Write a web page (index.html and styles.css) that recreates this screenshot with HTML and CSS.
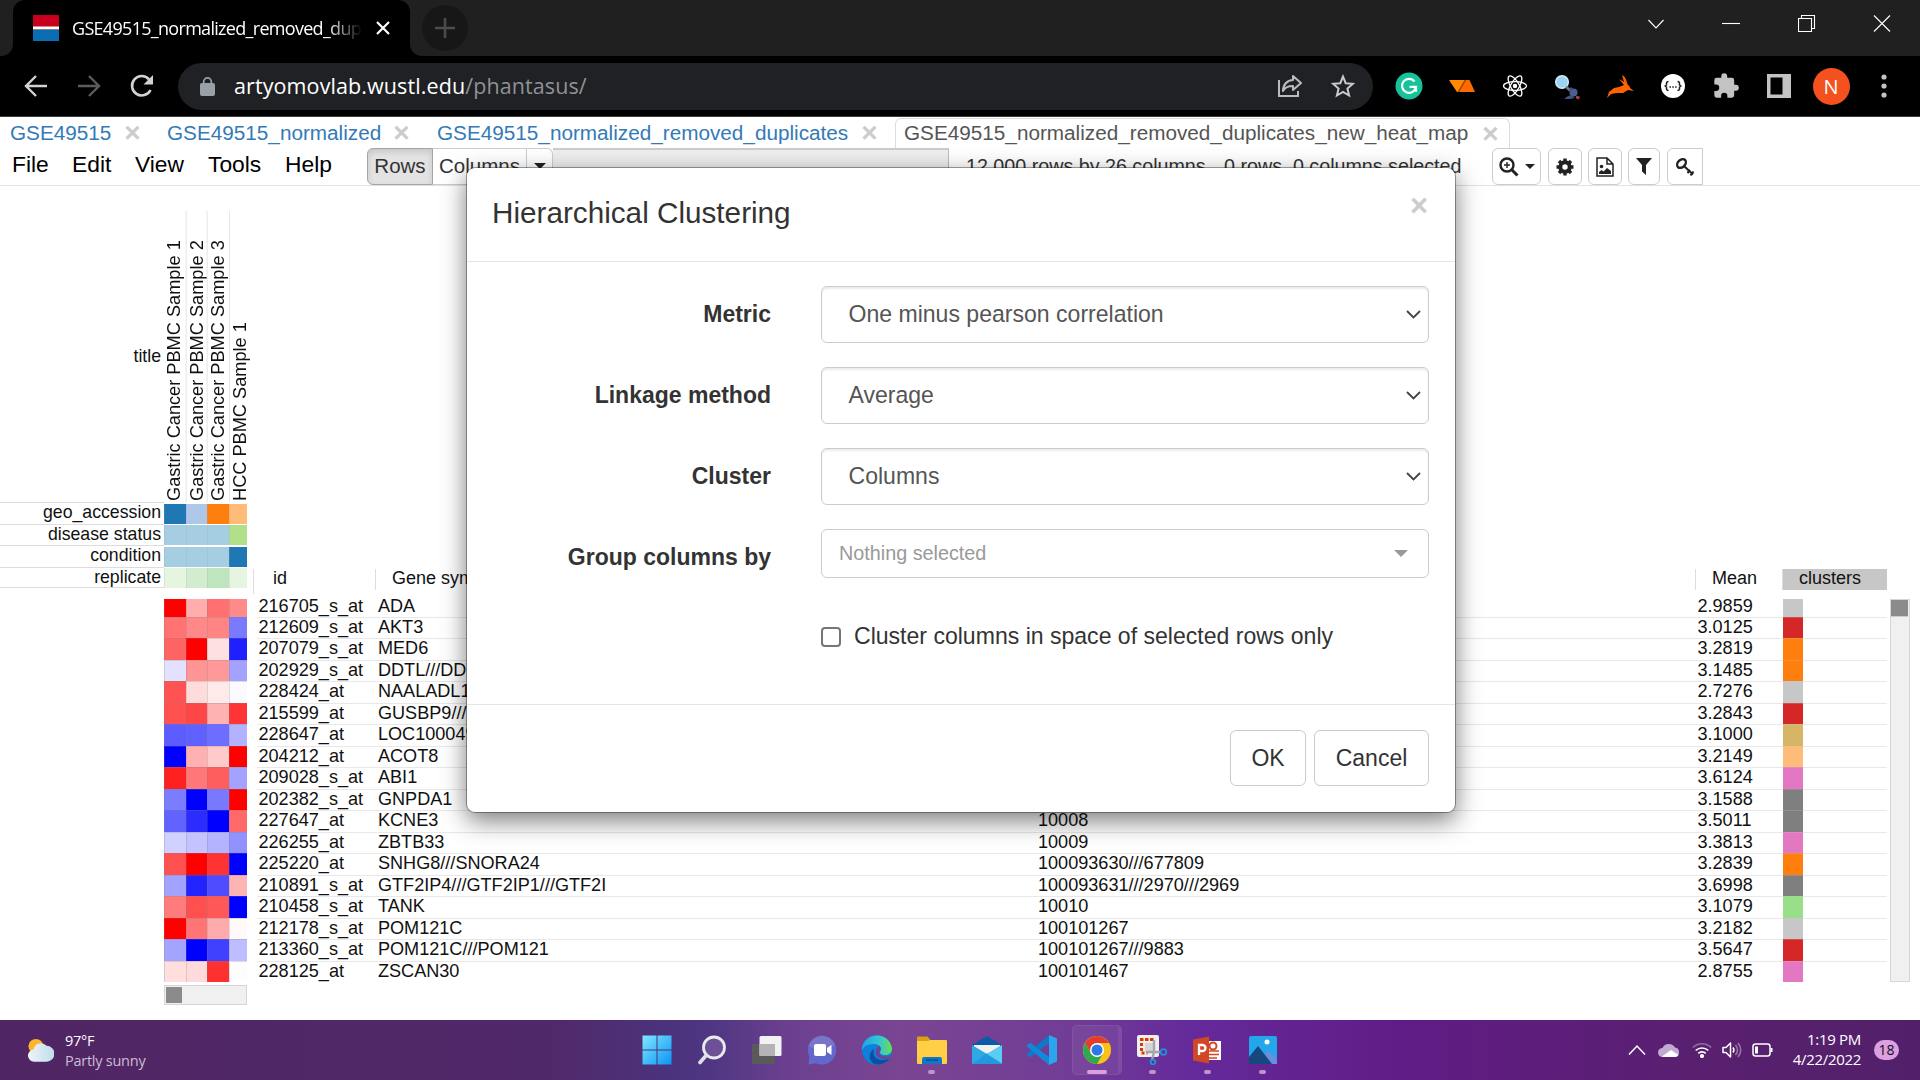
FILE: index.html
```html
<!DOCTYPE html>
<html lang="en">
<head>
<meta charset="utf-8">
<title>GSE49515_normalized_removed_duplicates_new_heat_map</title>
<link rel="stylesheet" href="styles.css">
</head>
<body>
<header class="tabstrip">
  <div class="browser-tab">
    <svg class="favicon" viewBox="0 0 26 26" preserveAspectRatio="none"><rect width="26" height="12" fill="#c8001e"/><rect y="11.500" width="26" height="3" fill="#fff"/><rect y="15" width="26" height="11" fill="#0a6cb2"/></svg>
    <span class="tab-title">GSE49515_normalized_removed_dup</span>
    <svg class="tab-x" viewBox="0 0 14 14"><path d="M1 1l12 12M13 1L1 13" stroke="#fff" stroke-width="2.200"/></svg>
  </div>
  <div class="new-tab"><svg width="20" height="20" viewBox="0 0 20 20"><path d="M10 0v20M0 10h20" stroke="#4c4c4c" stroke-width="2.500"/></svg></div>
  <div class="win-controls">
    <svg width="18" height="18" viewBox="0 0 18 18"><path d="M1.500 5L9 13 16.500 5"/></svg>
    <svg width="18" height="18" viewBox="0 0 18 18"><path d="M0 8.500h18"/></svg>
    <svg width="18" height="18" viewBox="0 0 18 18"><path d="M.5 3.500h13v13H.5zM3.500 3.500v-3h13v13h-3"/></svg>
    <svg width="18" height="18" viewBox="0 0 18 18"><path d="M1 .5l16 16M17 .5L1 16.500"/></svg>
  </div>
</header>

<div class="toolbar">
  <svg class="nav-back" width="24" height="24" viewBox="0 0 24 24"><path d="M23 12H3M12 2L2 12l10 10" fill="none" stroke="#d2d2d2" stroke-width="2.400"/></svg>
  <svg class="nav-fwd" width="24" height="24" viewBox="0 0 24 24"><path d="M1 12h20M12 2l10 10-10 10" fill="none" stroke="#5c5c5c" stroke-width="2.400"/></svg>
  <svg class="nav-reload" width="24" height="24" viewBox="0 0 24 24"><path d="M20.500 16A9.700 9.700 0 1 1 19 5.300" fill="none" stroke="#d2d2d2" stroke-width="2.600"/><path d="M23 1v9.500h-9.500z" fill="#d2d2d2"/></svg>
  <div class="omnibox">
    <svg width="15" height="19" viewBox="0 0 15 19"><rect y="6" width="15" height="13" rx="2" fill="#9aa0a6"/><path d="M3.700 7V4.700a3.800 3.800 0 0 1 7.600 0V7" fill="none" stroke="#9aa0a6" stroke-width="1.700"/></svg>
    <span class="url">artyomovlab.wustl.edu<span class="path">/phantasus/</span></span>
    <svg class="share" width="26" height="24" viewBox="0 0 26 24" fill="none" stroke="#b9bcbf" stroke-width="2"><path d="M2 6v16h19v-5"/><path d="M16 2l8 7-8 7v-4c-5 0-8 1-10 5 0-6 4-11 10-11z" stroke-linejoin="round"/></svg>
    <svg width="24" height="24" viewBox="0 0 24 24" fill="none" stroke="#c8cacc" stroke-width="2"><path d="M12 2.500l2.700 6.700 7.200.6-5.500 4.700 1.700 7-6.100-3.700-6.100 3.700 1.700-7L2.100 9.800l7.200-.6z"/></svg>
  </div>
  <div class="extensions">
    <svg width="28" height="28" viewBox="0 0 28 28"><circle cx="14" cy="14" r="13.500" fill="#15c39a"/><path d="M19.500 9.500A7 7 0 1 0 20.800 15.500M14.500 14.800h6.500v5" fill="none" stroke="#fff" stroke-width="2.200"/></svg>
    <svg width="28" height="28" viewBox="0 0 28 28"><path d="M1 8h17l-7 12H9z" fill="#ff8a00"/><path d="M18 8h3.500L27 20H11z" fill="#ff6a00"/><path d="M18 8l-7 12h-1.500l7-12z" fill="#a84300"/></svg>
    <svg width="28" height="28" viewBox="0 0 28 28" fill="none" stroke="#fff" stroke-width="1.300"><ellipse cx="14" cy="14" rx="11.500" ry="4.300"/><ellipse cx="14" cy="14" rx="11.500" ry="4.300" transform="rotate(60 14 14)"/><ellipse cx="14" cy="14" rx="11.500" ry="4.300" transform="rotate(120 14 14)"/><circle cx="14" cy="14" r="1.600" fill="#fff"/></svg>
    <svg width="28" height="28" viewBox="0 0 28 28"><circle cx="9" cy="10" r="6.300" fill="#9ad4f3" stroke="#d6e8f4" stroke-width="1.500"/><path d="M13 14.500l4 4" stroke="#6e7a92" stroke-width="2.600"/><circle cx="20.500" cy="20.500" r="4" fill="#4a608f"/><path d="M16 17l2-2 2 2-2 3zM11 27q3-3 7-4l4 3-5 1z" fill="#41547f"/><path d="M23 24l4 .5-1 3-3-1z" fill="#a8443d"/></svg>
    <svg width="28" height="28" viewBox="0 0 28 28"><path d="M1 26l2-6 5-4 5-1 5-2-5-6 5 3-2-7q4 2 5 8l1 2q2 1 2 3l4 3-6-1-5 3-6 0-6 1z" fill="#ff6200"/></svg>
    <svg width="28" height="28" viewBox="0 0 28 28"><circle cx="14" cy="14" r="12" fill="#fff"/><path d="M9.500 9.500q-2 0-2 2V13l-1.300 1 1.300 1v1.500q0 2 2 2M18.500 9.500q2 0 2 2V13l1.300 1-1.300 1v1.500q0 2-2 2" fill="none" stroke="#222" stroke-width="1.500"/><path d="M10.500 15h1.500m1.300 0h1.500m1.300 0h1.500" stroke="#222" stroke-width="1.500"/></svg>
    <svg width="28" height="28" viewBox="0 0 24 24"><path d="M20.500 11H19V7a2 2 0 0 0-2-2h-4V3.500a2.500 2.500 0 0 0-5 0V5H4a2 2 0 0 0-2 2v3.800h1.500a2.700 2.700 0 0 1 0 5.400H2V20a2 2 0 0 0 2 2h3.800v-1.500a2.700 2.700 0 0 1 5.400 0V22H17a2 2 0 0 0 2-2v-4h1.500a2.500 2.500 0 0 0 0-5z" fill="#c3c3c3"/></svg>
    <svg width="28" height="28" viewBox="0 0 28 28"><path d="M2 2h24v24H2zM5.500 5.500v17h12v-17z" fill="#c3c3c3" fill-rule="evenodd"/></svg>
  </div>
  <div class="avatar">N</div>
  <svg class="kebab" width="6" height="24" viewBox="0 0 6 24" fill="#c3c3c3"><circle cx="3" cy="3" r="2.600"/><circle cx="3" cy="12" r="2.600"/><circle cx="3" cy="21" r="2.600"/></svg>
</div>

<main class="page">
  <nav class="sheets">
    <a class="sheet s1">GSE49515</a><b class="x x1">×</b>
    <a class="sheet s2">GSE49515_normalized</a><b class="x x2">×</b>
    <a class="sheet s3">GSE49515_normalized_removed_duplicates</a><b class="x x3">×</b>
    <div class="active-sheet"><span class="s4">GSE49515_normalized_removed_duplicates_new_heat_map</span><b class="x">×</b></div>
  </nav>
  <div class="menubar">
    <span class="menu m1">File</span><span class="menu m2">Edit</span><span class="menu m3">View</span><span class="menu m4">Tools</span><span class="menu m5">Help</span>
    <div class="search">
      <span class="seg seg-on">Rows</span><span class="seg seg-col">Columns</span><span class="seg seg-caret"><i class="caret"></i></span><span class="search-box"></span>
    </div>
    <span class="info"><span class="dims">12,000 rows by 26 columns</span><span class="sel">0 rows, 0 columns selected</span></span>
    <div class="tools">
      <button class="tool t1"><svg width="20" height="20" viewBox="0 0 20 20" fill="none" stroke="#222"><circle cx="8" cy="8" r="6.500" stroke-width="2.400"/><path d="M13 13l5.500 5.500" stroke-width="3"/><path d="M8 5v6M5 8h6" stroke-width="1.400"/></svg><i class="caret small"></i></button>
      <button class="tool t2"><svg width="20" height="20" viewBox="0 0 20 20"><circle cx="10" cy="10" r="4.700" fill="none" stroke="#222" stroke-width="4"/><path d="M10 1.500v3M10 15.500v3M1.500 10h3M15.500 10h3M4 4l2 2M14 14l2 2M4 16l2-2M14 6l2-2" stroke="#222" stroke-width="3.400"/></svg></button>
      <button class="tool t3"><svg width="18" height="20" viewBox="0 0 18 20"><path d="M1 1h10l6 6v12H1zM11 1v6h6" fill="none" stroke="#222" stroke-width="1.500"/><circle cx="5.500" cy="9.500" r="1.800" fill="#222"/><path d="M3 17v-2l2.500-2 2 1.500 3.500-3.500 4 3v3z" fill="#222"/></svg></button>
      <button class="tool t4"><svg width="16" height="17" viewBox="0 0 16 17"><path d="M0 0h16l-6 7v10l-4-3.500V7z" fill="#222"/></svg></button>
      <button class="tool t5"><svg width="20" height="20" viewBox="0 0 20 20" fill="none" stroke="#222"><ellipse cx="6.500" cy="6.500" rx="5" ry="3.600" transform="rotate(-45 6.500 6.500)" stroke-width="2.400"/><path d="M9 9l9 8.500" stroke-width="2"/><path d="M12.500 16l2.500-3M15.500 18.500l3-4" stroke-width="2"/></svg></button>
    </div>
  </div>

  <section class="top">
    <div class="annot">
      <div class="titles">
        <span class="annot-label">title</span>
        <span class="vt">Gastric Cancer PBMC Sample 1</span><span class="vt">Gastric Cancer PBMC Sample 2</span><span class="vt">Gastric Cancer PBMC Sample 3</span><span class="vt">HCC PBMC Sample 1</span>
      </div>
      <div class="arow"><span class="annot-label">geo_accession</span><i style="background:#1f77b4"></i><i style="background:#aec7e8"></i><i style="background:#ff7f0e"></i><i style="background:#ffbb78"></i></div>
      <div class="arow"><span class="annot-label">disease status</span><i style="background:#a6cee3"></i><i style="background:#a6cee3"></i><i style="background:#a6cee3"></i><i style="background:#b2df8a"></i></div>
      <div class="arow"><span class="annot-label">condition</span><i style="background:#a6cee3"></i><i style="background:#a6cee3"></i><i style="background:#a6cee3"></i><i style="background:#1f78b4"></i></div>
      <div class="arow last"><span class="annot-label">replicate</span><i style="background:#e5f5e0"></i><i style="background:#d1ecce"></i><i style="background:#bfe5bf"></i><i style="background:#e5f5e0"></i></div>
    </div>
    <div class="colheads"><span class="ch c-id">id</span><span class="ch c-gene">Gene symbol</span><span class="ch c-mean">Mean</span><span class="ch c-clus">clusters</span></div>
  </section>

  <section class="grid-area">
    <div class="rows">
      <div class="row"><i style="background:#f00"></i><i style="background:#ffadad"></i><i style="background:#ff7070"></i><i style="background:#ff8a8a"></i><p><span>216705_s_at</span><span>ADA</span><span></span><span>2.9859</span><b style="background:#c7c7c7"></b></p></div>
      <div class="row"><i style="background:#ff7373"></i><i style="background:#ff8888"></i><i style="background:#ff8585"></i><i style="background:#7a7aff"></i><p><span>212609_s_at</span><span>AKT3</span><span></span><span>3.0125</span><b style="background:#d62728"></b></p></div>
      <div class="row"><i style="background:#ff6464"></i><i style="background:#f00"></i><i style="background:#ffe0e0"></i><i style="background:#2020ff"></i><p><span>207079_s_at</span><span>MED6</span><span></span><span>3.2819</span><b style="background:#ff7f0e"></b></p></div>
      <div class="row"><i style="background:#e2e2ff"></i><i style="background:#ff9494"></i><i style="background:#ff9898"></i><i style="background:#a3a3ff"></i><p><span>202929_s_at</span><span>DDTL///DDT</span><span></span><span>3.1485</span><b style="background:#ff7f0e"></b></p></div>
      <div class="row"><i style="background:#ff5252"></i><i style="background:#ffdcdc"></i><i style="background:#ffeaea"></i><i style="background:#fafaff"></i><p><span>228424_at</span><span>NAALADL1</span><span></span><span>2.7276</span><b style="background:#c7c7c7"></b></p></div>
      <div class="row"><i style="background:#ff5050"></i><i style="background:#ff4646"></i><i style="background:#ffb2b2"></i><i style="background:#ff3535"></i><p><span>215599_at</span><span>GUSBP9///S</span><span></span><span>3.2843</span><b style="background:#d62728"></b></p></div>
      <div class="row"><i style="background:#5d5dff"></i><i style="background:#6060ff"></i><i style="background:#6d6dff"></i><i style="background:#b2b2ff"></i><p><span>228647_at</span><span>LOC100049</span><span></span><span>3.1000</span><b style="background:#d6b566"></b></p></div>
      <div class="row"><i style="background:#00f"></i><i style="background:#ffb1b1"></i><i style="background:#ffcaca"></i><i style="background:#f00"></i><p><span>204212_at</span><span>ACOT8</span><span></span><span>3.2149</span><b style="background:#ffbb78"></b></p></div>
      <div class="row"><i style="background:#ff2020"></i><i style="background:#ff7777"></i><i style="background:#ff5e5e"></i><i style="background:#a3a3ff"></i><p><span>209028_s_at</span><span>ABI1</span><span></span><span>3.6124</span><b style="background:#e377c2"></b></p></div>
      <div class="row"><i style="background:#7c7cff"></i><i style="background:#00f"></i><i style="background:#7979ff"></i><i style="background:#f00"></i><p><span>202382_s_at</span><span>GNPDA1</span><span></span><span>3.1588</span><b style="background:#7f7f7f"></b></p></div>
      <div class="row"><i style="background:#6262ff"></i><i style="background:#2c2cff"></i><i style="background:#00f"></i><i style="background:#ff6969"></i><p><span>227647_at</span><span>KCNE3</span><span>10008</span><span>3.5011</span><b style="background:#7f7f7f"></b></p></div>
      <div class="row"><i style="background:#d1d1ff"></i><i style="background:#c3c3ff"></i><i style="background:#b3b3ff"></i><i style="background:#9292ff"></i><p><span>226255_at</span><span>ZBTB33</span><span>10009</span><span>3.3813</span><b style="background:#e377c2"></b></p></div>
      <div class="row"><i style="background:#ff5050"></i><i style="background:#f00"></i><i style="background:#ff3333"></i><i style="background:#00f"></i><p><span>225220_at</span><span>SNHG8///SNORA24</span><span>100093630///677809</span><span>3.2839</span><b style="background:#ff7f0e"></b></p></div>
      <div class="row"><i style="background:#a2a2ff"></i><i style="background:#2323ff"></i><i style="background:#4d4dff"></i><i style="background:#ffb4b4"></i><p><span>210891_s_at</span><span>GTF2IP4///GTF2IP1///GTF2I</span><span>100093631///2970///2969</span><span>3.6998</span><b style="background:#7f7f7f"></b></p></div>
      <div class="row"><i style="background:#ff7c7c"></i><i style="background:#ff5050"></i><i style="background:#ff5858"></i><i style="background:#00f"></i><p><span>210458_s_at</span><span>TANK</span><span>10010</span><span>3.1079</span><b style="background:#98df8a"></b></p></div>
      <div class="row"><i style="background:#f00"></i><i style="background:#ff7575"></i><i style="background:#ffabab"></i><i style="background:#fff9f9"></i><p><span>212178_s_at</span><span>POM121C</span><span>100101267</span><span>3.2182</span><b style="background:#c7c7c7"></b></p></div>
      <div class="row"><i style="background:#a4a4ff"></i><i style="background:#00f"></i><i style="background:#4040ff"></i><i style="background:#bdbdff"></i><p><span>213360_s_at</span><span>POM121C///POM121</span><span>100101267///9883</span><span>3.5647</span><b style="background:#d62728"></b></p></div>
      <div class="row"><i style="background:#ffdede"></i><i style="background:#ffdada"></i><i style="background:#ff3030"></i><i style="background:#fdfdff"></i><p><span>228125_at</span><span>ZSCAN30</span><span>100101467</span><span>2.8755</span><b style="background:#e377c2"></b></p></div>
    </div>
    <div class="vscroll"><i></i></div>
  </section>
  <div class="hscroll"><i></i></div>

  <div class="modal">
    <div class="modal-head"><h4>Hierarchical Clustering</h4><b class="close">×</b></div>
    <form class="modal-body">
      <div class="field"><label class="l1">Metric</label><div class="select"><span class="v1">One minus pearson correlation</span><svg width="15" height="9" viewBox="0 0 15 9"><path d="M1 1l6.500 6.500L14 1"/></svg></div></div>
      <div class="field"><label class="l2">Linkage method</label><div class="select"><span class="v2">Average</span><svg width="15" height="9" viewBox="0 0 15 9"><path d="M1 1l6.500 6.500L14 1"/></svg></div></div>
      <div class="field"><label class="l3">Cluster</label><div class="select"><span class="v3">Columns</span><svg width="15" height="9" viewBox="0 0 15 9"><path d="M1 1l6.500 6.500L14 1"/></svg></div></div>
      <div class="field group"><label class="l4">Group columns by</label><div class="select picker"><span>Nothing selected</span><i class="caret"></i></div></div>
      <div class="check"><i class="box"></i><span>Cluster columns in space of selected rows only</span></div>
    </form>
    <div class="modal-foot"><button class="btn ok">OK</button><button class="btn cancel">Cancel</button></div>
  </div>
</main>

<footer class="taskbar">
  <div class="weather">
    <svg width="26" height="25" viewBox="0 0 28 26"><defs><linearGradient id="cl" x1="0" x2="1"><stop offset="0" stop-color="#eef3f8"/><stop offset="1" stop-color="#bfdcec"/></linearGradient></defs><circle cx="8.500" cy="8.500" r="8" fill="#fbb62a"/><path d="M7 25a6.500 6.500 0 0 1-1-13 8 8 0 0 1 14-4 8.500 8.500 0 0 1 0 17z" fill="url(#cl)"/></svg>
    <div><div class="temp">97°F</div><div class="cond">Partly sunny</div></div>
  </div>
  <div class="apps">
    <span class="app"><svg width="30" height="30" viewBox="0 0 30 30"><defs><linearGradient id="win" x1="0" y1="0" x2="1" y2="1"><stop offset="0" stop-color="#7fe8ff"/><stop offset="1" stop-color="#0b93f5"/></linearGradient></defs><path d="M.5.500h14v14H.5zM15.500.500h14v14h-14zM.5 15.500h14v14H.5zM15.500 15.500h14v14h-14z" fill="url(#win)"/></svg></span>
    <span class="app"><svg width="30" height="30" viewBox="0 0 30 30"><circle cx="17" cy="12.500" r="10.500" fill="#8a6aa8" fill-opacity=".5" stroke="#e8eaee" stroke-width="2.800"/><path d="M9.500 20L3 27.500" stroke="#dfe0e4" stroke-width="3.600" stroke-linecap="round"/></svg></span>
    <span class="app"><svg width="30" height="30" viewBox="0 0 30 30"><rect x="0" y="9" width="23" height="20" rx="1.500" fill="#5a5a5a"/><rect x="7.500" y="1" width="22" height="20" rx="1.500" fill="#f2f2f2"/><path d="M7.500 9H23v12H7.500z" fill="#b5b3b5"/></svg></span>
    <span class="app"><svg width="30" height="30" viewBox="0 0 30 30"><path d="M15 .5A14.500 14.500 0 1 1 9 28.300L1.500 29.500l.8-8A14.500 14.500 0 0 1 15 .5z" fill="#6368cc"/><path d="M1.500 11A14 14 0 0 1 28 10L15 18z" fill="#8c7fc6" opacity=".6"/><rect x="7" y="9" width="12" height="12" rx="2" fill="#fff"/><path d="M20 13l4.500-3v10L20 17z" fill="#fff"/></svg></span>
    <span class="app"><svg width="30" height="30" viewBox="0 0 30 30"><defs><linearGradient id="eg" x1="0" x2="1"><stop offset="0" stop-color="#1ea5ea"/><stop offset=".6" stop-color="#36c7cf"/><stop offset="1" stop-color="#6be04b"/></linearGradient></defs><circle cx="15" cy="15" r="15" fill="#0f7fdc"/><path d="M0 13C2-2 26-5 30 13c0 5-3 7-7 7-5 0-6-2-4-5 0-4-3-6-7-6C5 9 1 12 0 16z" fill="url(#eg)"/><path d="M12 14c-3 9 6 14 16 9-4 6-10 7-14 6.500C6 28 6 17 12 14z" fill="#0c4f9e"/><path d="M17 11c4 2 0 5 0 7 1 3 7 5 12 2l-2 3c-7 3-14-1-13-6 0-3 1-5 3-6z" fill="#773f91"/></svg></span>
    <span class="app run"><svg width="30" height="30" viewBox="0 0 30 30"><path d="M0 2.500q0-1 1-1h9.500l3 3.500V10H0z" fill="#dca010"/><path d="M0 6h11l2-1h16q1 0 1 1v22q0 1-1 1H1q-1 0-1-1z" fill="#ffcf45"/><path d="M5 29v-5q0-2 2-2h16q2 0 2 2v5z" fill="#0f76c8"/><path d="M9 25h12" stroke="#0a4c92" stroke-width="1.500"/></svg></span>
    <span class="app"><svg width="30" height="30" viewBox="0 0 30 30"><path d="M0 10L15 1l15 9v4H0z" fill="#0b5ba9"/><path d="M2 10h26v10H2z" fill="#f1f1f1"/><path d="M0 10l15 9 15-9v19H0z" fill="#2ea9e4"/><path d="M0 29h30L15 18z" fill="#1a90da" opacity=".6"/><path d="M30 10v18.500L15 19z" fill="#5acdf2"/></svg></span>
    <span class="app"><svg width="30" height="30" viewBox="0 0 30 30"><path d="M22 0l8 3.500v23L22 30z" fill="#2ba6ee"/><path d="M22 0v8L3 22.500 0 20v-1.500z" fill="#0f79c8"/><path d="M22 30v-8L3 7.500 0 10v1.500z" fill="#1189d8"/></svg></span>
    <span class="app run active"><svg width="28" height="28" viewBox="0 0 28 28"><circle cx="14" cy="14" r="14" fill="#fbc116"/><path d="M14 7h12.100A14 14 0 0 0 1.900 7L8 17z" fill="#e33b2e"/><path d="M1.900 7A14 14 0 0 0 14 28l6-10.500-6 3.500-6-3.500z" fill="#2da94f"/><circle cx="14" cy="14" r="7" fill="#fff"/><circle cx="14" cy="14" r="5.500" fill="#2b78e8"/></svg></span>
    <span class="app run"><svg width="30" height="30" viewBox="0 0 30 30"><rect x="0" y="0" width="22" height="22" rx="2" fill="#eee"/><path d="M3 4.500h14" stroke="#d83b01" stroke-width="3" stroke-dasharray="3.500 1.500"/><path d="M4.500 8v10h6" fill="none" stroke="#d83b01" stroke-width="3" stroke-dasharray="3 2"/><path d="M8 8h9v9H8z" fill="#d6d6d6"/><path d="M17 5v12l-2 8M9 17h15" fill="none" stroke="#a1a7ab" stroke-width="2.400"/><circle cx="26.500" cy="17" r="2.800" fill="none" stroke="#1d92dc" stroke-width="1.800"/><circle cx="16" cy="27" r="2.400" fill="none" stroke="#1d92dc" stroke-width="1.800"/></svg></span>
    <span class="app run"><svg width="28" height="28" viewBox="0 0 28 28"><path d="M12 5h16v19H12z" fill="#fff"/><path d="M16 15h10M16 18.500h10M16 22h8" stroke="#d24726" stroke-width="1.500"/><circle cx="20" cy="10" r="3.500" fill="none" stroke="#d24726" stroke-width="2"/><path d="M0 3.500L16 .5v27L0 24.500z" fill="#d24625"/><path d="M6 19V9h3.500a3 3 0 0 1 0 6H6" fill="none" stroke="#fff" stroke-width="2.300"/></svg></span>
    <span class="app run"><svg width="28" height="30" viewBox="0 0 28 30"><rect y="1" width="28" height="28" rx="2" fill="#24a6ea"/><path d="M10 29l9-14 9 10v4z" fill="#6b8cdf"/><path d="M0 22L9 11l14 18H0z" fill="#16477e"/><circle cx="18" cy="7" r="2.500" fill="#fff"/></svg></span>
  </div>
  <div class="tray">
    <svg width="18" height="12" viewBox="0 0 18 12"><path d="M1 10.500L9 2l8 8.500" fill="none" stroke="#fff" stroke-width="1.500"/></svg>
    <svg width="21" height="14" viewBox="0 0 21 14"><path d="M4.500 14a4.500 4.500 0 0 1 0-9A7 7 0 0 1 17 4.500a4.800 4.800 0 0 1 0 9.500z" fill="#c3aad0"/><path d="M4 13.500L13 7l7.500 5q-1 2-3.500 2H5z" fill="#fff"/></svg>
    <svg width="20" height="16" viewBox="0 0 20 16" fill="none" stroke="#fff" stroke-width="1.600"><path d="M.8 5.500a13 13 0 0 1 18.400 0" stroke-opacity=".35"/><path d="M3.700 8.500a9 9 0 0 1 12.600 0"/><path d="M6.300 11.400a5.300 5.300 0 0 1 7.400 0"/><circle cx="10" cy="14" r="1.300" fill="#fff"/></svg>
    <svg width="20" height="18" viewBox="0 0 20 18" fill="none" stroke="#fff" stroke-width="1.500"><path d="M1 6.500h3L8.500 2v14L4 11.500H1z" stroke-linejoin="round"/><path d="M11 6.500q1.800 2.500 0 5"/><path d="M13.500 4q4 5 0 10M16 2q5.500 7 0 14" stroke-opacity=".4"/></svg>
    <svg width="21" height="14" viewBox="0 0 21 14"><rect x="1" y="1" width="17" height="12" rx="2.500" fill="none" stroke="#fff" stroke-width="1.500"/><path d="M3 3.500h3v7H3zM18.500 5h2v4h-2z" fill="#fff"/></svg>
  </div>
  <div class="clock"><div class="time">1:19 PM</div><div class="date">4/22/2022</div></div>
  <div class="badge">18</div>
</footer>
</body>
</html>
```

FILE: styles.css
```css
* { box-sizing: border-box; }
body { margin: 0; width: 1920px; height: 1080px; overflow: hidden; display: flex; flex-direction: column; background: #fff; color: #333; font-family: "Liberation Sans", Arial, sans-serif; }
svg { display: block; flex: none; }
button { font-family: inherit; background: #fff; border: 1px solid #ccc; border-radius: 6px; color: #333; padding: 0; display: flex; align-items: center; justify-content: center; }
i { font-style: normal; }
span, label, a, h4 { white-space: nowrap; }

/* Browser tab strip */
.tabstrip { height: 56px; flex: none; background: #202020; display: flex; padding-left: 13px; }
.browser-tab { width: 397px; height: 56px; background: #000; border-radius: 12px 12px 0 0; display: flex; align-items: center; padding: 0 20px; position: relative; }
.browser-tab::before, .browser-tab::after { content: ""; position: absolute; bottom: 0; width: 12px; height: 12px; }
.browser-tab::before { left: -12px; background: radial-gradient(circle at 0 0, #202020 11.5px, #000 12.5px); }
.browser-tab::after { right: -12px; background: radial-gradient(circle at 100% 0, #202020 11.5px, #000 12.5px); }
.favicon { width: 26px; height: 26px; }
.tab-title { font: 18px/24px "Open Sans", sans-serif; letter-spacing: -.7px; color: #fff; margin-left: 13px; width: 290px; overflow: hidden; -webkit-mask-image: linear-gradient(90deg, #000 88%, transparent); mask-image: linear-gradient(90deg, #000 88%, transparent); }
.tab-x { width: 14px; height: 14px; margin-left: 14px; }
.new-tab { width: 46px; height: 46px; margin: 5px 0 0 12px; border-radius: 50%; background: #171717; display: flex; align-items: center; justify-content: center; }
.win-controls { margin-left: auto; display: flex; gap: 57.500px; padding: 15px 29px 0 0; }
.win-controls path { fill: none; stroke: #fff; stroke-width: 1.1; }

/* Address toolbar */
.toolbar { height: 61px; flex: none; background: #000; border-bottom: 1px solid #3a3a3a; display: flex; align-items: center; }
.nav-back { margin-left: 24px; }
.nav-fwd { margin-left: 29px; }
.nav-reload { margin-left: 29px; }
.omnibox { width: 1195px; height: 47px; margin-left: 24px; border-radius: 24px; background: #202124; display: flex; align-items: center; padding: 0 18px 0 22px; }
.url { font: 21.5px/30px "Open Sans", sans-serif; color: #fff; margin-left: 19px; letter-spacing: .1px; }
.path { color: #8f9296; }
.share { margin-left: auto; margin-right: 28px; }
.extensions { display: flex; gap: 24.800px; margin-left: 22px; }
.avatar { width: 37px; height: 37px; margin-left: 20px; border-radius: 50%; background: #f4511e; color: #fff; font: 20px/37px "Open Sans", sans-serif; text-align: center; }
.kebab { margin-left: 31px; }

/* Sheet tabs */
.page { flex: 1; position: relative; display: flex; flex-direction: column; }
.sheets { height: 31px; flex: none; display: flex; align-items: center; font-size: 20.730px; padding-left: 10px; }
.sheet { color: #337ab7; }
.x { font-size: 28px; line-height: 20px; color: #ccc; width: 15px; display: flex; justify-content: center; margin-top: 1px; }
.s1 { width: 102px; } .x1 { margin: 1px 27px 0 13px; }
.s2 { width: 214px; } .x2 { margin: 1px 28px 0 13px; }
.s3 { width: 412px; } .x3 { margin: 1px 18px 0 13px; }
.active-sheet { align-self: flex-start; width: 615px; height: 33px; margin-top: 1px; border: 1px solid #ddd; border-bottom: 0; border-radius: 6px 6px 0 0; padding: 0 0 4px 8px; color: #555; display: flex; align-items: center; }
.s4 { width: 566px; margin-right: 13px; }

/* Menu bar */
.menubar { height: 38px; flex: none; border-bottom: 1px solid #e2e2e2; display: flex; align-items: flex-start; }
.menu { font-size: 22.800px; line-height: 32px; color: #000; height: 33px; }
.m1 { margin-left: 12px; width: 60px; } .m2 { width: 63px; } .m3 { width: 73px; } .m4 { width: 77px; } .m5 { width: 82px; }
.search { display: flex; height: 37px; font-size: 20.500px; line-height: 34px; width: 582px; }
.seg { border: 1px solid #ccc; height: 37px; display: flex; align-items: center; justify-content: center; background: #fff; padding-bottom: 1px; }
.seg-on { width: 66px; background: #e3e3e3; border-color: #a5a5a5; border-radius: 6px 0 0 6px; box-shadow: inset 0 3px 6px rgba(0,0,0,.13); }
.seg-col { width: 94px; border-left: 0; }
.seg-caret { width: 26px; border-left: 0; border-radius: 0 6px 6px 0; }
.search-box { flex: 1; border-top: 2px solid #ccc; border-right: 1px solid #bbb; background: #eee; height: 37px; }
.caret { width: 0; height: 0; border: 6px solid transparent; border-top-color: #222; border-bottom: 0; }
.info { margin-left: 17px; font-size: 19.700px; line-height: 37px; display: flex; width: 508px; }
.dims { width: 258px; flex: none; }
.tools { display: flex; margin-left: 18px; }
.tool { height: 37px; margin-right: 6px; }
.t1 { width: 49px; gap: 6px; margin-right: 7px; } .t2 { width: 34px; } .t3 { width: 34px; } .t4 { width: 32px; margin-right: 7px; } .t5 { width: 36px; border-radius: 6px 0 0 6px; }
.caret.small { border-width: 5px; border-bottom: 0; }

/* Column annotations */
.top { height: 404px; flex: none; display: flex; align-items: flex-start; font-size: 18px; color: #111; padding-top: 25px; }
.annot { width: 247px; }
.annot-label { width: 164px; padding-right: 3px; text-align: right; font-size: 17.700px; }
.titles { height: 291px; display: flex; }
.titles .annot-label { line-height: 291px; }
.vt { writing-mode: vertical-rl; transform: rotate(180deg); width: 21.670px; line-height: 20px; height: 291px; padding-top: 1px; font-size: 18.200px; }
.vt + .vt { border-right: 1px solid #e6e6e6; }
.vt:last-child { width: 18px; }
.arow { display: flex; height: 21.500px; }
.arow .annot-label { border-top: 1px solid #ddd; line-height: 18px; }
.arow.last .annot-label { border-bottom: 1px solid #ddd; }
.arow i { width: 21.670px; margin-top: 1.500px; box-shadow: inset 1px 0 rgba(160,160,160,.2); }
.arow i:last-child { width: 18px; }
.colheads { display: flex; height: 21px; margin: 358px 0 0 6px; }
.ch { border-left: 1px solid #ddd; line-height: 19px; height: 21px; }
.c-id { width: 122px; height: 25px; padding-left: 19px; } .c-gene { width: 1320px; padding-left: 16px; }
.c-mean { width: 87px; padding-left: 16px; } .c-clus { width: 105px; padding-left: 16px; background: #c7c7c7; }

/* Heat map rows */
.grid-area { display: flex; margin: 9px 0 0 164px; height: 383px; flex: none; }
.row { display: flex; height: 21.470px; align-items: flex-end; }
.row:first-child { height: 18px; overflow: hidden; }
.row i { width: 21.670px; height: 21.470px; flex: none; box-shadow: inset 1px 1px rgba(128,128,128,.25); }
.row i:nth-child(4) { width: 18px; }
.row p { margin: 0 0 0 10px; width: 1630px; height: 21.470px; padding-left: 1.500px; display: grid; grid-template-columns: 119.500px 660px 659.500px 85.500px 20px; border-top: 1px solid #e8e8e8; font-size: 18.100px; line-height: 19px; color: #111; }
.row b { box-shadow: inset 0 1px rgba(200,200,200,.25); margin-top: -1px; }
.vscroll { width: 20px; margin-left: 3px; border: 1px solid #d6d6d6; background: #f0f0f0; height: 383px; }
.vscroll i { display: block; height: 17px; width: 17px; background: #8b8b8b; border-bottom: 1px solid #ccc; }
.hscroll { width: 83px; height: 20px; flex: none; margin: 3px 0 0 164px; border: 1px solid #d6d6d6; padding: 1px; background: #f0f0f0; }
.hscroll i { display: block; width: 16px; height: 16px; background: #8b8b8b; }

/* Dialog */
.modal { position: absolute; left: 466px; top: 50px; width: 990px; height: 646px; background: #fff; border: 1px solid rgba(0,0,0,.35); border-radius: 9px; background-clip: padding-box; box-shadow: 0 8px 24px rgba(0,0,0,.5); display: flex; flex-direction: column; }
.modal-head { height: 94px; border-bottom: 1px solid #e5e5e5; display: flex; justify-content: space-between; padding: 0 27px 0 25px; }
h4 { margin: 28px 0 0; font-weight: 400; font-size: 29.700px; line-height: 34px; }
.close { font-size: 31px; line-height: 30px; color: #ccc; margin-top: 23px; }
.modal-body { height: 443px; padding: 24px 26px 0 0; border-bottom: 1px solid #e5e5e5; font-size: 23.050px; display: flex; flex-direction: column; gap: 24.500px; }
.field { display: flex; height: 56.500px; }
.field label { width: 304px; text-align: right; font-weight: 700; line-height: 56px; font-size: 23px; }
.select { flex: 1; margin-left: 50px; height: 56.500px; border: 1px solid #ccc; border-radius: 6px; box-shadow: inset 0 2px 2px rgba(0,0,0,.075); display: flex; align-items: center; justify-content: space-between; padding: 0 7px 0 26.500px; color: #555; }
.select path { fill: none; stroke: #444; stroke-width: 1.8; }
.picker { height: 49px; box-shadow: none; padding: 0 20px 0 17px; font-size: 19.800px; color: #999; }
.picker .caret { border-width: 7px; border-bottom: 0; border-top-color: #999; }
.check { display: flex; align-items: center; margin: -1px 0 0 354px; height: 56px; }
.box { width: 20px; height: 20px; border: 2px solid #767676; border-radius: 4px; margin-right: 13px; }
.check span { margin-top: -1px; }
.modal-foot { display: flex; justify-content: flex-end; gap: 8px; padding: 25px 26px 0 0; }
.btn { height: 56px; font-size: 23px; }
.ok { width: 76px; } .cancel { width: 115px; }

/* Taskbar */
.taskbar { height: 60px; flex: none; display: flex; color: #fff; font-family: "Open Sans", sans-serif; background: linear-gradient(90deg, #502563 0, #50296a 560px, #4b327c 660px, #4f3682 710px, #6c4090 790px, #7a4592 900px, #703c96 1080px, #652a9b 1190px, #601c86 1400px, #59206f 1700px, #52206a 1920px); }
.weather { width: 629px; display: flex; padding: 11px 0 0 28px; gap: 11px; font-size: 14.500px; line-height: 20px; letter-spacing: -.25px; }
.weather svg { margin-top: 7px; }
.cond { color: #cdbcd4; }
.apps { display: flex; }
.app { width: 55.100px; height: 60px; display: flex; align-items: center; justify-content: center; position: relative; }
.run::after { content: ""; position: absolute; bottom: 6px; left: 24px; width: 7px; height: 4px; border-radius: 2px; background: #b898c8; }
.active::before { content: ""; position: absolute; inset: 5px 3px 5px 2px; border-radius: 5px; background: rgba(255,255,255,.06); border: 1px solid rgba(255,255,255,.07); border-right-width: 4px; }
.active::after { left: 17px; width: 20px; background: #dc9fe2; }
.active svg { position: relative; }
.tray { display: flex; align-items: center; margin-left: 338px; gap: 12px; }
.tray svg:nth-child(n+3) { margin-left: 1px; }
.tray svg:nth-child(n+4) { margin-left: -2px; }
.clock { margin-left: auto; text-align: right; font-size: 15px; line-height: 20px; padding-top: 9px; letter-spacing: -.3px; }
.badge { width: 25px; height: 20px; margin: 20px 21px 0 13px; border-radius: 10px; background: #dc9fe2; color: #111; font-size: 14px; line-height: 20px; text-align: center; }
```
